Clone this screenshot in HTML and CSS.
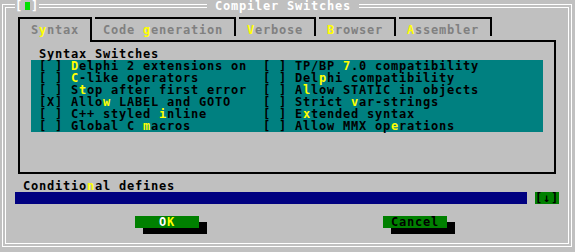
FILE: index.html
```html
<!DOCTYPE html>
<html lang="en">
  <head>
    <meta charset="UTF-8" />
    <meta name="viewport" content="width=device-width, initial-scale=1.0" />
    <title>Compiler Switches</title>
    <link rel="stylesheet" href="styles.css">
  </head>
  <body>
    <div class="screen">
      <div class="frame-outer">
        <div class="frame-inner">
          <!-- Tabs -->
          <div class="tabs">
            <div class="tab active">S<span class="hk">y</span>ntax</div>
            <div class="tab">Code <span class="hk">g</span>eneration</div>
            <div class="tab"><span class="hk">V</span>erbose</div>
            <div class="tab"><span class="hk">B</span>rowser</div>
            <div class="tab"><span class="hk">A</span>ssembler</div>
          </div>

          <div class="panel">
            <div class="group-title">Syntax Switches</div>
            <div class="checks">
              <div class="check">[ ] <span class="hk">D</span>elphi 2 extensions on</div>
              <div class="check">[ ] TP/BP <span class="hk">7</span>.0 compatibility</div>
              <div class="check">[ ] <span class="hk">C</span>-like operators</div>
              <div class="check">[ ] Del<span class="hk">p</span>hi compatibility</div>
              <div class="check">[ ] S<span class="hk">t</span>op after first error</div>
              <div class="check">[ ] A<span class="hk">l</span>low STATIC in objects</div>
              <div class="check">[X] Allo<span class="hk">w</span> LABEL and GOTO</div>
              <div class="check">[ ] Strict <span class="hk">v</span>ar-strings</div>
              <div class="check">[ ] C++ styled <span class="hk">i</span>nline</div>
              <div class="check">[ ] E<span class="hk">x</span>tended syntax</div>
              <div class="check">[ ] Global C <span class="hk">m</span>acros</div>
              <div class="check">[ ] Allow MMX op<span class="hk">e</span>rations</div>
            </div>
          </div>

          <div class="field-label">Conditio<span class="hk">n</span>al defines</div>
          <div class="input-row">
            <div class="input"></div>
            <div class="history">[↓]</div>
          </div>

          <div class="buttons">
            <div class="btn default">O<span class="hk">K</span></div>
            <div class="btn">Cancel</div>
          </div>
        </div>
      </div>

      <!-- Title sits on top of the double frame line -->
      <div class="titlebar">
        <div class="close">[<span class="close-box"></span>]</div>
        <div class="title">Compiler Switches</div>
      </div>
    </div>
  </body>
</html>
```

FILE: styles.css
```css
body {
  margin: 0;
  padding: 0;
  background-color: #c0c0c0;
  font-family: "DejaVu Sans Mono", "Liberation Mono", monospace;
  font-weight: bold;
  font-size: 12px;
  letter-spacing: 0.7754px; /* 8px character cells */
  line-height: 12px;
  color: #000;
}

.screen {
  position: relative;
  width: 575px;
  height: 252px;
  box-sizing: border-box;
  padding: 4px 3px 5px 2px;
}

.frame-outer {
  height: 243px;
  box-sizing: border-box;
  border: 1px solid #fff;
}

.frame-inner {
  height: 237px;
  margin: 2px;
  box-sizing: border-box;
  border: 1px solid #fff;
  padding-top: 9px;
}

.hk {
  color: #ffff00;
}

.tab,
.title,
.group-title,
.check,
.field-label,
.btn,
.history {
  white-space: pre;
}

/* title bar */
.titlebar {
  position: absolute;
  top: 0;
  left: 15px;
  display: flex;
  height: 12px;
}

.close {
  width: 24px;
  background-color: #c0c0c0;
  color: #fff;
}

.close-box {
  display: inline-block;
  vertical-align: top;
  width: 5px;
  height: 8px;
  margin: 2px 1px 0 2px;
  background-color: #00e000;
}

.title {
  margin-left: 168px;
  padding: 0 8px;
  background-color: #c0c0c0;
  color: #fff;
}

/* tabs */
.tabs {
  display: flex;
  align-items: flex-start;
  gap: 3px;
  margin-left: 12px;
}

.tab {
  height: 19px;
  box-sizing: border-box;
  padding: 5px 11px 0 8px;
  border-top: 2px solid #000;
  border-right: 2px solid #000;
  color: #808080;
}

.tab.active {
  position: relative;
  z-index: 1;
  height: 25px;
  padding-left: 11px;
  border-left: 2px solid #000;
  background-color: #c0c0c0;
}

.panel {
  width: 538px;
  height: 134px;
  box-sizing: border-box;
  margin: -2px 0 0 12px;
  border: 2px solid #000;
  padding-top: 6px;
}

.group-title {
  margin-left: 19px;
}

.checks {
  display: grid;
  grid-template-columns: 224px 1fr;
  width: 512px;
  box-sizing: border-box;
  margin-left: 11px;
  padding-left: 8px;
  background-color: #008080;
}

/* bottom part */
.field-label {
  margin: 6px 0 0 17px;
}

.input-row {
  display: flex;
  gap: 8px;
  margin-left: 9px;
}

.input {
  width: 512px;
  height: 12px;
  background-color: #000080;
}

.history {
  width: 24px;
  background-color: #008000;
}

.buttons {
  display: flex;
  gap: 184px;
  margin: 12px 0 0 129px;
}

.btn {
  width: 64px;
  height: 12px;
  text-align: center;
  background-color: #008000;
  box-shadow: 8px 6px 0 #000;
}

.btn.default {
  color: #fff;
}
```
